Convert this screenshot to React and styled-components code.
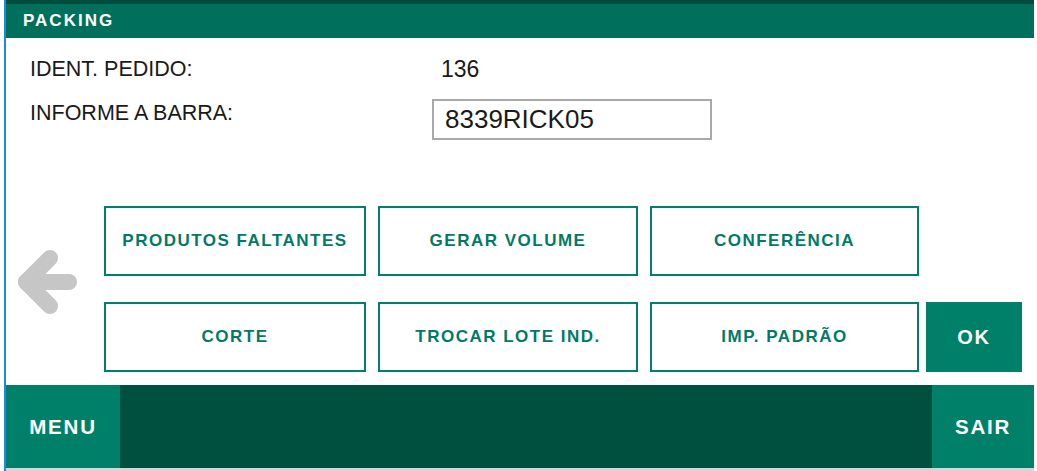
import React from 'react';
import styled, { createGlobalStyle } from 'styled-components';

const GlobalStyle = createGlobalStyle`
  html, body {
    margin: 0;
    padding: 0;
    background: #fff;
    font-family: "Liberation Sans", Arial, sans-serif;
  }
`;

const Page = styled.div`
  width: 1037px;
  height: 471px;
  overflow: hidden;
  padding-left: 4px;
  box-sizing: border-box;
`;

const Panel = styled.div`
  width: 1030px;
  box-sizing: border-box;
  border-left: 2px solid #1e88e5;
  display: flex;
  flex-direction: column;
`;

const Header = styled.div`
  height: 34px;
  border-top: 4px solid #004d3d;
  background: #00705c;
  color: #fff;
  display: flex;
  align-items: center;
  padding-left: 17px;
  font-size: 17px;
  font-weight: bold;
  letter-spacing: 2px;
`;

const Form = styled.div`
  display: grid;
  grid-template-columns: 402px 1fr;
  row-gap: 16px;
  padding: 17px 0 0 24px;
`;

const Label = styled.div`
  font-size: 21.5px;
  line-height: 28px;
  color: #1a1a1a;
`;

const Value = styled.div`
  font-size: 23px;
  line-height: 28px;
  color: #1a1a1a;
  padding-left: 9px;
`;

const BarInput = styled.input`
  width: 280px;
  height: 41px;
  box-sizing: border-box;
  border: 2px solid #a9a9a9;
  padding: 0 0 0 11px;
  font-family: "Liberation Sans", Arial, sans-serif;
  font-size: 26px;
  color: #1a1a1a;
  outline: none;
`;

const Actions = styled.div`
  display: flex;
  margin-top: 66px;
`;

const BackZone = styled.div`
  width: 98px;
  display: flex;
  align-items: center;
`;

const BackArrow = styled.svg`
  margin-left: 4px;
  margin-bottom: 14px;
  cursor: pointer;
`;

const ButtonGrid = styled.div`
  display: grid;
  grid-template-columns: 262px 260px 269px;
  grid-template-rows: 70px 70px;
  gap: 26px 12px;
`;

const OkColumn = styled.div`
  display: flex;
  flex-direction: column;
  justify-content: flex-end;
  margin-left: 7px;
`;

const ActionButton = styled.button`
  box-sizing: border-box;
  border: 2px solid #008069;
  background: ${p => (p.$primary ? '#008069' : '#fff')};
  color: ${p => (p.$primary ? '#fff' : '#007a66')};
  font-family: "Liberation Sans", Arial, sans-serif;
  font-weight: bold;
  font-size: ${p => (p.$primary ? '20px' : '17px')};
  letter-spacing: ${p => (p.$primary ? '1.8px' : '1.5px')};
  cursor: pointer;
  padding: 0;
`;

const OkButton = styled(ActionButton)`
  width: 96px;
  height: 70px;
`;

const Footer = styled.div`
  margin-top: 13px;
  height: 83px;
  display: flex;
  background: #00503f;
  border-bottom: 4px solid #d6d6d6;
`;

const FooterButton = styled.button`
  width: ${p => p.$width}px;
  border: none;
  background: #008069;
  color: #fff;
  font-family: "Liberation Sans", Arial, sans-serif;
  font-weight: bold;
  font-size: 20.5px;
  letter-spacing: 1.8px;
  padding: 0;
  cursor: pointer;
`;

const Spacer = styled.div`
  flex: 1;
`;

export default function App() {
  return (
    <Page>
      <GlobalStyle />
      <Panel>
        <Header>PACKING</Header>
        <Form>
          <Label>IDENT. PEDIDO:</Label>
          <Value>136</Value>
          <Label>INFORME A BARRA:</Label>
          <div>
            <BarInput defaultValue="8339RICK05" />
          </div>
        </Form>
        <Actions>
          <BackZone>
            <BackArrow width="70" height="70" viewBox="0 0 70 70">
              <polyline
                points="40,11 16,35 40,59"
                fill="none"
                stroke="#c6c6c6"
                strokeWidth="16"
                strokeLinecap="round"
                strokeLinejoin="round"
              />
              <line x1="16" y1="35" x2="59" y2="35" stroke="#c6c6c6" strokeWidth="16" strokeLinecap="round" />
            </BackArrow>
          </BackZone>
          <ButtonGrid>
            <ActionButton>PRODUTOS FALTANTES</ActionButton>
            <ActionButton>GERAR VOLUME</ActionButton>
            <ActionButton>CONFERÊNCIA</ActionButton>
            <ActionButton>CORTE</ActionButton>
            <ActionButton>TROCAR LOTE IND.</ActionButton>
            <ActionButton>IMP. PADRÃO</ActionButton>
          </ButtonGrid>
          <OkColumn>
            <OkButton $primary>OK</OkButton>
          </OkColumn>
        </Actions>
        <Footer>
          <FooterButton $width={114}>MENU</FooterButton>
          <Spacer />
          <FooterButton $width={102}>SAIR</FooterButton>
        </Footer>
      </Panel>
    </Page>
  );
}
